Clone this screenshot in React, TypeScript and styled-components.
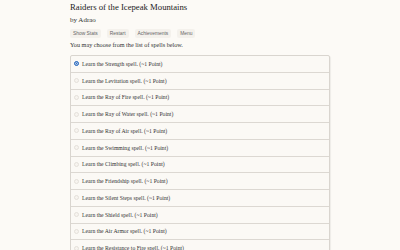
import React from "react";
import styled, { createGlobalStyle } from "styled-components";

const GlobalStyle = createGlobalStyle`
  html, body {
    margin: 0;
    padding: 0;
    background: #fcfaf6;
  }
  body {
    font-family: "Liberation Serif", "Times New Roman", serif;
    color: #2b2b2b;
  }
`;

const Page = styled.div`
  width: 260px;
  margin: 0 auto;
  padding-top: 2px;
`;

const Title = styled.h1`
  margin: 0;
  font-size: 8.7px;
  font-weight: normal;
  line-height: 11px;
  color: #222;
`;

const Author = styled.div`
  font-size: 7px;
  line-height: 8px;
  margin-top: 3px;
  color: #333;
`;

const Toolbar = styled.div`
  display: flex;
  gap: 6px;
  margin-top: 5px;
`;

const ToolButton = styled.button`
  font-family: "Liberation Sans", Arial, sans-serif;
  font-size: 4.9px;
  color: #666;
  background: #f4f1ec;
  border: none;
  border-radius: 2px;
  padding: 2px 3px;
  line-height: 5px;
`;

const Intro = styled.p`
  margin: 3px 0 0;
  font-size: 6.2px;
  line-height: 7px;
  color: #333;
`;

const List = styled.div`
  margin-top: 7px;
  border: 1px solid #d9d5cf;
  border-radius: 2px;
  background: #fbf9f5;
  box-shadow: 1px 1px 1px rgba(0, 0, 0, 0.06);
`;

const Option = styled.label<{ $first?: boolean }>`
  display: flex;
  align-items: center;
  gap: 3px;
  height: 15.75px;
  padding-left: 3px;
  border-top: ${p => (p.$first ? "none" : "1px solid #dcd8d2")};
  font-size: 5.7px;
  color: #333;
`;

const Radio = styled.span<{ $checked?: boolean }>`
  width: 5px;
  height: 5px;
  border-radius: 50%;
  box-sizing: border-box;
  background: ${p => (p.$checked ? "#2f6dc0" : "#f7f4ef")};
  border: ${p => (p.$checked ? "1.5px solid #2f6dc0" : "0.5px solid #e4e0da")};
  box-shadow: ${p => (p.$checked ? "inset 0 0 0 0.6px #fff" : "none")};
  flex-shrink: 0;
`;

const spells = [
  "Strength",
  "Levitation",
  "Ray of Fire",
  "Ray of Water",
  "Ray of Air",
  "Swimming",
  "Climbing",
  "Friendship",
  "Silent Steps",
  "Shield",
  "Air Armor",
  "Resistance to Fire",
];

export default function App() {
  return (
    <>
      <GlobalStyle />
      <Page>
        <Title>Raiders of the Icepeak Mountains</Title>
        <Author>by Adrao</Author>
        <Toolbar>
          <ToolButton>Show Stats</ToolButton>
          <ToolButton>Restart</ToolButton>
          <ToolButton>Achievements</ToolButton>
          <ToolButton>Menu</ToolButton>
        </Toolbar>
        <Intro>You may choose from the list of spells below.</Intro>
        <List>
          {spells.map((s, i) => (
            <Option key={s} $first={i === 0}>
              <Radio $checked={i === 0} />
              Learn the {s} spell. (~1 Point)
            </Option>
          ))}
        </List>
      </Page>
    </>
  );
}
